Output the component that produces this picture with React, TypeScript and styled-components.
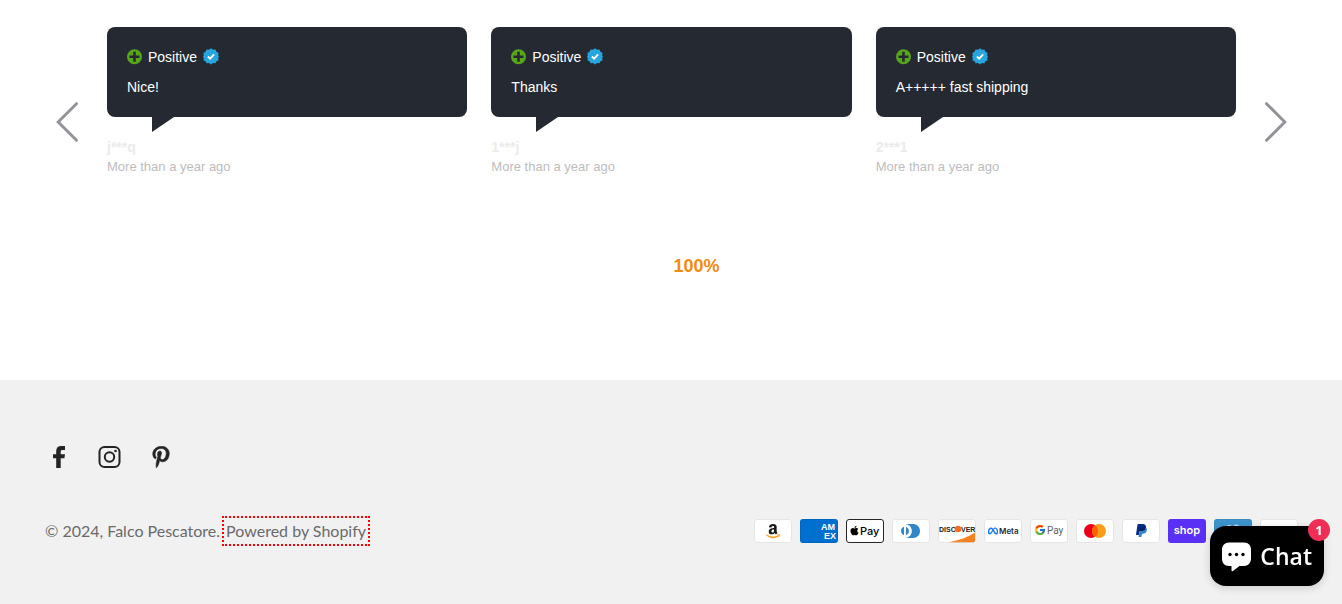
import React from "react";
import styled, { createGlobalStyle } from "styled-components";
import { FaAmazon, FaApple, FaPinterestP } from "react-icons/fa";
import { FaMeta } from "react-icons/fa6";
import { FcGoogle } from "react-icons/fc";

const GlobalStyle = createGlobalStyle`
  *, *::before, *::after { box-sizing: border-box; }
  body {
    margin: 0;
    background: #ffffff;
    font-family: "Liberation Sans", Arial, sans-serif;
  }
`;

const Reviews = styled.section`
  padding: 27px 54px 102px 55px;
`;

const Carousel = styled.div`
  display: flex;
  align-items: center;
  gap: 28px;
`;

const ArrowButton = styled.button`
  flex: none;
  width: 24px;
  height: 42px;
  padding: 0;
  border: 0;
  background: none;
  color: #93949a;
  cursor: pointer;

  svg { display: block; }
`;

const Track = styled.ul`
  flex: 1;
  display: grid;
  grid-template-columns: repeat(3, 1fr);
  gap: 24px;
  margin: 0;
  padding: 0 0 40px;
  list-style: none;
`;

const Bubble = styled.div`
  position: relative;
  display: flex;
  flex-direction: column;
  gap: 10px;
  padding: 20px;
  border-radius: 8px;
  background: #252a32;
  color: #ffffff;
  font-size: 14px;
  line-height: 20px;

  &::after {
    content: "";
    position: absolute;
    top: 100%;
    left: 45px;
    border-top: 15px solid #252a32;
    border-right: 22px solid transparent;
  }
`;

const Rating = styled.div`
  display: flex;
  align-items: center;
  gap: 6px;
  height: 20px;
`;

const ReviewText = styled.p`
  margin: 0;
`;

const Meta = styled.div`
  margin-top: 20px;
  line-height: 20px;
`;

const Author = styled.div`
  color: #ebebeb;
  font-size: 14px;
  font-weight: 700;
`;

const Age = styled.div`
  color: #bdbdbd;
  font-size: 13px;
`;

const Score = styled.p`
  margin: 37px 0 0;
  padding-left: 50px;
  color: #f28c0f;
  font-size: 18px;
  font-weight: 700;
  line-height: 24px;
  text-align: center;
`;

const Footer = styled.footer`
  padding: 55px 44px 58px 45px;
  background: #f1f1f1;
`;

const SocialList = styled.ul`
  display: flex;
  gap: 7px;
  margin: 0 0 37px -8px;
  padding: 0;
  list-style: none;
`;

const SocialLink = styled.a`
  display: flex;
  align-items: center;
  justify-content: center;
  width: 44px;
  height: 44px;
  color: #242424;
`;

const FooterBottom = styled.div`
  display: flex;
  align-items: center;
  justify-content: space-between;
`;

const Copyright = styled.small`
  display: flex;
  align-items: center;
  gap: 2px;
  color: #6a6a6a;
  font-family: Lato, "Liberation Sans", sans-serif;
  font-size: 16px;
  line-height: 24px;
`;

const PoweredLink = styled.a`
  padding: 1px 2px;
  border: 2px dotted #ff0000;
  color: inherit;
  text-decoration: none;
`;

const PaymentList = styled.ul`
  display: flex;
  gap: 8px;
  margin: 0;
  padding: 0;
  list-style: none;

  svg { display: block; }
`;

const ChatButton = styled.button`
  position: fixed;
  right: 18px;
  bottom: 18px;
  display: flex;
  align-items: center;
  gap: 8px;
  height: 60px;
  padding: 0 12px 0 11px;
  border: 0;
  border-radius: 16px;
  background: #000000;
  box-shadow: 0 2px 8px rgba(0, 0, 0, 0.16);
  color: #ffffff;
  font-family: "Open Sans", "Noto Sans", sans-serif;
  font-size: 23px;
  font-weight: 600;
  line-height: 32px;
  cursor: pointer;
`;

const ChatBadge = styled.span`
  position: absolute;
  top: -7px;
  right: -6px;
  width: 22px;
  height: 22px;
  border-radius: 50%;
  background: #ee2e55;
  font-size: 13px;
  font-weight: 700;
  line-height: 22px;
  text-align: center;
`;

const reviews = [
  { text: "Nice!", author: "j***q" },
  { text: "Thanks", author: "1***j" },
  { text: "A+++++ fast shipping", author: "2***1" },
];

function PlusIcon() {
  return (
    <svg width="15" height="16" viewBox="0 0 15 16" aria-hidden="true">
      <circle cx="7.5" cy="7.8" r="7.500" fill="#57a51b" />
      <path d="M7.5 2.800v10M2.500 7.800h10" stroke="#252a32" strokeWidth="2.600" />
    </svg>
  );
}

function VerifiedIcon() {
  return (
    <svg width="16" height="18" viewBox="0 0.500 17 18" aria-label="Verified">
      <path
        fill="#27a5dc"
        d="M8.500 .3 10.600 1.900 13.200 1.600 14.300 4 16.600 5.300 16.100 7.900 17 9 16.100 10.800 16.600 12.900 14.300 14 13.200 16.200 10.600 16 8.500 17.500 6.400 16 3.800 16.200 2.700 14 .4 12.900 .9 10.800 0 9 .9 7.900 .4 5.300 2.700 4 3.800 1.600 6.400 1.900z"
      />
      <path d="M5.200 9l2.400 2.300 4.200-4.500" fill="none" stroke="#fff" strokeWidth="2" />
    </svg>
  );
}

function Card({ label, fill = "#fff", border = "#000", opacity = 0.1, children }: {
  label: string;
  fill?: string;
  border?: string;
  opacity?: number;
  children?: React.ReactNode;
}) {
  return (
    <li>
      <svg width="38" height="24" viewBox="0 0 38 24" role="img" aria-label={label}>
        <rect width="38" height="24" rx="3" fill={fill} />
        {children}
        <rect x=".5" y=".5" width="37" height="23" rx="2.500" fill="none" stroke={border} strokeOpacity={opacity} />
      </svg>
    </li>
  );
}

function Payments() {
  return (
    <PaymentList aria-label="Payment methods">
      <Card label="Amazon">
        <clipPath id="amazon-letter"><rect width="38" height="15.300" /></clipPath>
        <clipPath id="amazon-smile"><rect y="15.300" width="38" height="9" /></clipPath>
        <g clipPath="url(#amazon-letter)"><FaAmazon x="11" y="4" size={16} color="#1a1a1a" /></g>
        <g clipPath="url(#amazon-smile)"><FaAmazon x="11" y="4" size={16} color="#f79a1c" stroke="#f79a1c" strokeWidth="14" /></g>
      </Card>
      <Card label="American Express" fill="#006fcf" opacity={0.07}>
        <g fill="#fff" fontFamily="Liberation Sans" fontSize="9" fontWeight="700">
          <text x="21" y="11">AM</text>
          <text x="24" y="20">EX</text>
        </g>
      </Card>
      <Card label="Apple Pay" opacity={0.85}>
        <FaApple x="3" y="6" size={11} color="#000" />
        <text x="14" y="16" fontFamily="Inter" fontSize="11" fontWeight="500">Pay</text>
      </Card>
      <Card label="Diners Club">
        <path
          fill="#3086c8"
          d="M12 12v3.700c0 .3-.2.3-.5.2-1.900-.8-3-3.300-2.300-5.400.4-1.100 1.200-2 2.300-2.400.4-.2.5-.1.5.2V12zm2 0V8.300c0-.3 0-.3.3-.2 2.100.8 3.200 3.300 2.400 5.400-.4 1.100-1.200 2-2.400 2.400-.4.2-.4.1-.4-.2V12zm7.200-7H13c3.800 0 6.800 3.100 6.800 7s-3 7-6.800 7h8.200c3.800 0 6.800-3.100 6.800-7s-3-7-6.800-7z"
        />
      </Card>
      <Card label="Discover">
        <path d="M11 23.200C21 21.500 30 18 37 13.500V21.500a1.700 1.700 0 0 1-1.700 1.700z" fill="#f58220" />
        <g fontFamily="Liberation Sans" fontSize="7" fontWeight="700" fill="#222">
          <text x="1" y="13">DISC</text>
          <text x="23" y="13">VER</text>
        </g>
        <circle cx="20" cy="10" r="3.200" fill="#f26e21" />
      </Card>
      <Card label="Meta Pay">
        <FaMeta x="4" y="7" size={10} color="#0a6fe8" stroke="#0a6fe8" strokeWidth="24" />
        <text x="15" y="15" fontFamily="Inter" fontSize="8" fontWeight="600" fill="#1c2b33">Meta</text>
      </Card>
      <Card label="Google Pay">
        <FcGoogle x="4" y="5" size={12} />
        <text x="17" y="15" fontFamily="Roboto" fontSize="10" fill="#5f6368">Pay</text>
      </Card>
      <Card label="Mastercard">
        <circle cx="15" cy="12" r="7" fill="#eb001b" />
        <circle cx="23" cy="12" r="7" fill="#f79e1b" />
        <path d="M22 12c0-2.400-1.200-4.500-3-5.700-1.800 1.300-3 3.400-3 5.700s1.200 4.500 3 5.700c1.800-1.200 3-3.300 3-5.700z" fill="#ff5f00" />
      </Card>
      <Card label="PayPal">
        <path fill="#003087" d="M23.900 8.300c.2-1 0-1.700-.6-2.300-.6-.7-1.700-1-3.100-1h-4.100c-.3 0-.5.2-.6.5L14 15.600c0 .2.1.4.3.4H17l.4-3.400 1.800-2.200 4.700-2.100z" />
        <path fill="#3086c8" d="M23.900 8.300l-.2.2c-.5 2.800-2.200 3.800-4.600 3.800H18c-.3 0-.5.2-.6.5l-.6 3.900-.2 1c0 .2.1.4.3.4H19c.3 0 .5-.2.5-.4v-.1l.4-2.400v-.1c0-.2.3-.4.5-.4h.3c2.100 0 3.700-.8 4.100-3.200.2-1 .1-1.800-.4-2.400-.1-.5-.3-.7-.5-.8z" />
        <path fill="#012169" d="M23.300 8.100c-.1-.1-.2-.1-.3-.1-.1 0-.2 0-.3-.1-.3-.1-.7-.1-1.100-.1h-3c-.1 0-.2 0-.2.1-.2.1-.3.2-.3.4l-.7 4.400v.1c0-.3.3-.5.6-.5h1.300c2.500 0 4.100-1 4.600-3.800v-.2c-.1-.1-.3-.2-.5-.2h-.1z" />
      </Card>
      <Card label="Shop Pay" fill="#5a31f4" opacity={0}>
        <text x="19" y="15" textAnchor="middle" fontFamily="Inter" fontSize="11" fontWeight="600" fill="#fff">shop</text>
      </Card>
      <Card label="Venmo" fill="#3d95ce" opacity={0.07}>
        <path d="M13 7.500q2-1.500 4-.5M20 7q3-1.500 5 .5" stroke="#fff" strokeOpacity=".6" strokeWidth="1.500" fill="none" />
      </Card>
      <Card label="Visa" />
    </PaymentList>
  );
}

export default function App() {
  return (
    <>
      <GlobalStyle />
      <main>
        <Reviews aria-label="Customer reviews">
          <Carousel>
            <ArrowButton type="button" aria-label="Previous reviews">
              <svg width="24" height="42" viewBox="0 0 24 42">
                <path d="M21.500 2.700 3.200 21l18.300 18.300" fill="none" stroke="currentColor" strokeWidth="3" strokeLinecap="round" />
              </svg>
            </ArrowButton>
            <Track>
              {reviews.map((review) => (
                <li key={review.author}>
                  <Bubble>
                    <Rating>
                      <PlusIcon />
                      <span>Positive</span>
                      <VerifiedIcon />
                    </Rating>
                    <ReviewText>{review.text}</ReviewText>
                  </Bubble>
                  <Meta>
                    <Author>{review.author}</Author>
                    <Age>More than a year ago</Age>
                  </Meta>
                </li>
              ))}
            </Track>
            <ArrowButton type="button" aria-label="Next reviews">
              <svg width="24" height="42" viewBox="0 0 24 42">
                <path d="M2.500 2.700 20.800 21 2.500 39.300" fill="none" stroke="currentColor" strokeWidth="3" strokeLinecap="round" />
              </svg>
            </ArrowButton>
          </Carousel>
          <Score>100%</Score>
        </Reviews>
      </main>

      <Footer>
        <SocialList>
          <li>
            <SocialLink href="#facebook" aria-label="Facebook">
              <svg width="14" height="22" viewBox="0 0 14 22">
                <path fill="currentColor" d="M4.200 22V12.300H1V8.300h3.200V5.200C4.200 1.900 6 0 9.200 0H13v4h-2.300C9.200 4 8.700 4.600 8.700 5.900v2.400H13l-.6 4H8.700V22z" />
              </svg>
            </SocialLink>
          </li>
          <li>
            <SocialLink href="#instagram" aria-label="Instagram">
              <svg width="24" height="22" viewBox="0 0 24 22" fill="none" stroke="currentColor" strokeWidth="2">
                <rect x="1.500" y="1" width="20" height="20" rx="5" />
                <circle cx="11.500" cy="11" r="4.700" />
                <circle cx="17.500" cy="5" r="1.300" fill="currentColor" stroke="none" />
              </svg>
            </SocialLink>
          </li>
          <li>
            <SocialLink href="#pinterest" aria-label="Pinterest">
              <FaPinterestP size={22} stroke="currentColor" strokeWidth="14" />
            </SocialLink>
          </li>
        </SocialList>
        <FooterBottom>
          <Copyright>
            <span>© 2024, Falco Pescatore.</span>
            <PoweredLink href="#shopify">Powered by Shopify</PoweredLink>
          </Copyright>
          <Payments />
        </FooterBottom>
      </Footer>

      <ChatButton type="button">
        <svg width="31" height="32" viewBox="0 0 31 32" aria-hidden="true">
          <path fill="#fff" d="M8 2.500h15c4.500 0 7 3 7 7v9c0 4.500-3 7.500-7 7.500h-4.500l-6.500 5c-.8.500-1.500.2-1.500-.7V26H8c-4.500 0-7-3-7-7.500v-9c0-4 3-7 7-7z" />
          <circle cx="9" cy="14.500" r="1.700" fill="#000" />
          <circle cx="15.500" cy="14.500" r="1.700" fill="#000" />
          <circle cx="22" cy="14.500" r="1.700" fill="#000" />
        </svg>
        <span>Chat</span>
        <ChatBadge>1</ChatBadge>
      </ChatButton>
    </>
  );
}
